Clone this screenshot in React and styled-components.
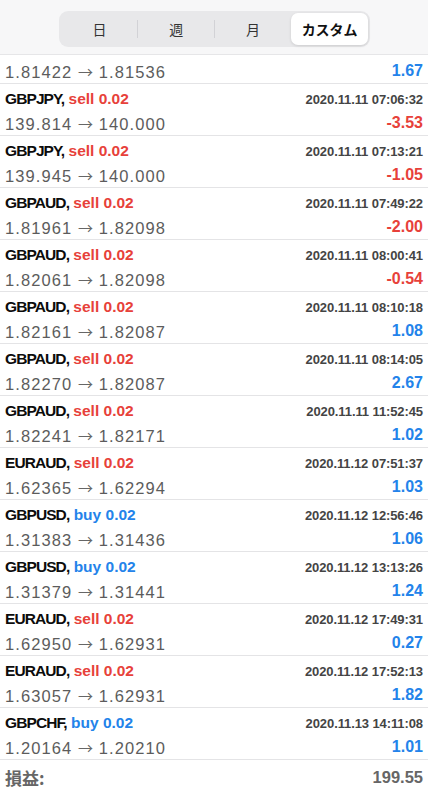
import React from 'react'
import styled, { createGlobalStyle } from 'styled-components'

const GlobalStyle = createGlobalStyle`
  html, body {
    margin: 0;
    padding: 0;
    background: #ffffff;
    overflow: hidden;
  }
  body {
    font-family: "Liberation Sans", "Noto Sans CJK JP", sans-serif;
  }
`;

const Screen = styled.div`
  width: 428px;
  height: 796px;
  display: flex;
  flex-direction: column;
  overflow: hidden;
  background: #ffffff;
`;

const Header = styled.div`
  flex: 0 0 55px;
  display: flex;
  justify-content: center;
  align-items: flex-start;
  padding: 11px 0 0 1px;
  box-sizing: border-box;
  background: #f7f7f8;
  border-bottom: 1px solid #e6e6e8;
  position: relative;
  z-index: 1;
`;

const Segmented = styled.div`
  width: 311px;
  height: 36px;
  box-sizing: border-box;
  padding: 2px;
  border-radius: 9px;
  background: #e8e8ea;
  display: grid;
  grid-template-columns: repeat(4, 1fr);
`;

const Segment = styled.div`
  position: relative;
  display: flex;
  align-items: center;
  justify-content: center;
  font-family: "Noto Sans CJK JP", sans-serif;
  font-size: 14px;
  font-weight: ${({ $active }) => ($active ? 700 : 400)};
  color: ${({ $active }) => ($active ? '#111' : '#333')};
  background: ${({ $active }) => ($active ? '#ffffff' : 'transparent')};
  border-radius: 7px;
  box-shadow: ${({ $active }) => ($active ? '0 1px 3px rgba(0,0,0,0.12)' : 'none')};

  &::before {
    content: '';
    display: ${({ $divider }) => ($divider ? 'block' : 'none')};
    position: absolute;
    left: -1px;
    top: 7px;
    bottom: 7px;
    width: 1px;
    background: #d2d2d6;
  }
`;

const ListClip = styled.div`
  flex: 1;
  overflow: hidden;
`;

const List = styled.div`
  margin-top: -23px;
  display: flex;
  flex-direction: column;
`;

const Row = styled.div`
  height: 52px;
  box-sizing: border-box;
  padding: 5px 5px 0 5px;
  border-bottom: 1px solid #e4e4e6;
  display: grid;
  grid-template-columns: 1fr auto;
  grid-template-rows: 20px 24px;
  row-gap: 2px;
  align-items: center;
`;

const Title = styled.div`
  font-size: 15.5px;
  font-weight: 700;
  color: #0c0c0c;
  white-space: nowrap;
`;

const Symbol = styled.span`
  letter-spacing: -0.9px;
`;

const Side = styled.span`
  color: ${({ $type }) => ($type === 'buy' ? '#2383ea' : '#e7413a')};
`;

const DateText = styled.div`
  font-size: 13px;
  font-weight: 700;
  letter-spacing: -0.1px;
  color: #444;
  text-align: right;
  white-space: nowrap;
`;

const Prices = styled.div`
  font-size: 16.5px;
  letter-spacing: 1.1px;
  color: #5c5c5c;
  white-space: nowrap;
`;

const Arrow = styled.span`
  font-family: "Noto Sans CJK JP", sans-serif;
  font-size: 15px;
  letter-spacing: 0;
  color: #666;
`;

const Profit = styled.div`
  font-size: 16px;
  font-weight: 700;
  text-align: right;
  color: ${({ $neg }) => ($neg ? '#e7413a' : '#2383ea')};
`;

const SummaryRow = styled.div`
  height: 34px;
  padding: 0 5px;
  display: flex;
  justify-content: space-between;
  align-items: center;
`;

const SummaryLabel = styled.div`
  font-family: "Noto Sans CJK JP", sans-serif;
  font-size: 17px;
  font-weight: 700;
  color: #666;
`;

const SummaryValue = styled.div`
  font-size: 16.5px;
  font-weight: 700;
  color: #666;
`;

const trades = [
  { sym: 'GBPAUD', side: 'buy', date: '2020.11.10 15:21:09', open: '1.81422', close: '1.81536', profit: '1.67' },
  { sym: 'GBPJPY', side: 'sell', date: '2020.11.11 07:06:32', open: '139.814', close: '140.000', profit: '-3.53' },
  { sym: 'GBPJPY', side: 'sell', date: '2020.11.11 07:13:21', open: '139.945', close: '140.000', profit: '-1.05' },
  { sym: 'GBPAUD', side: 'sell', date: '2020.11.11 07:49:22', open: '1.81961', close: '1.82098', profit: '-2.00' },
  { sym: 'GBPAUD', side: 'sell', date: '2020.11.11 08:00:41', open: '1.82061', close: '1.82098', profit: '-0.54' },
  { sym: 'GBPAUD', side: 'sell', date: '2020.11.11 08:10:18', open: '1.82161', close: '1.82087', profit: '1.08' },
  { sym: 'GBPAUD', side: 'sell', date: '2020.11.11 08:14:05', open: '1.82270', close: '1.82087', profit: '2.67' },
  { sym: 'GBPAUD', side: 'sell', date: '2020.11.11 11:52:45', open: '1.82241', close: '1.82171', profit: '1.02' },
  { sym: 'EURAUD', side: 'sell', date: '2020.11.12 07:51:37', open: '1.62365', close: '1.62294', profit: '1.03' },
  { sym: 'GBPUSD', side: 'buy', date: '2020.11.12 12:56:46', open: '1.31383', close: '1.31436', profit: '1.06' },
  { sym: 'GBPUSD', side: 'buy', date: '2020.11.12 13:13:26', open: '1.31379', close: '1.31441', profit: '1.24' },
  { sym: 'EURAUD', side: 'sell', date: '2020.11.12 17:49:31', open: '1.62950', close: '1.62931', profit: '0.27' },
  { sym: 'EURAUD', side: 'sell', date: '2020.11.12 17:52:13', open: '1.63057', close: '1.62931', profit: '1.82' },
  { sym: 'GBPCHF', side: 'buy', date: '2020.11.13 14:11:08', open: '1.20164', close: '1.20210', profit: '1.01' },
];

const tabs = ['日', '週', '月', 'カスタム'];

const App = () => {
  return (
    <Screen>
      <GlobalStyle />
      <Header>
        <Segmented>
          {tabs.map((t, i) => (
            <Segment key={t} $active={i === 3} $divider={i === 1 || i === 2}>
              {t}
            </Segment>
          ))}
        </Segmented>
      </Header>
      <ListClip>
        <List>
          {trades.map((t, i) => (
            <Row key={i}>
              <Title>
                <Symbol>{t.sym},</Symbol> <Side $type={t.side}>{t.side} 0.02</Side>
              </Title>
              <DateText>{t.date}</DateText>
              <Prices>
                {t.open} <Arrow>→</Arrow> {t.close}
              </Prices>
              <Profit $neg={t.profit.startsWith('-')}>{t.profit}</Profit>
            </Row>
          ))}
          <SummaryRow>
            <SummaryLabel>損益:</SummaryLabel>
            <SummaryValue>199.55</SummaryValue>
          </SummaryRow>
          <SummaryRow>
            <SummaryLabel>クレジット:</SummaryLabel>
            <SummaryValue>0.00</SummaryValue>
          </SummaryRow>
        </List>
      </ListClip>
    </Screen>
  )
}

export default App
